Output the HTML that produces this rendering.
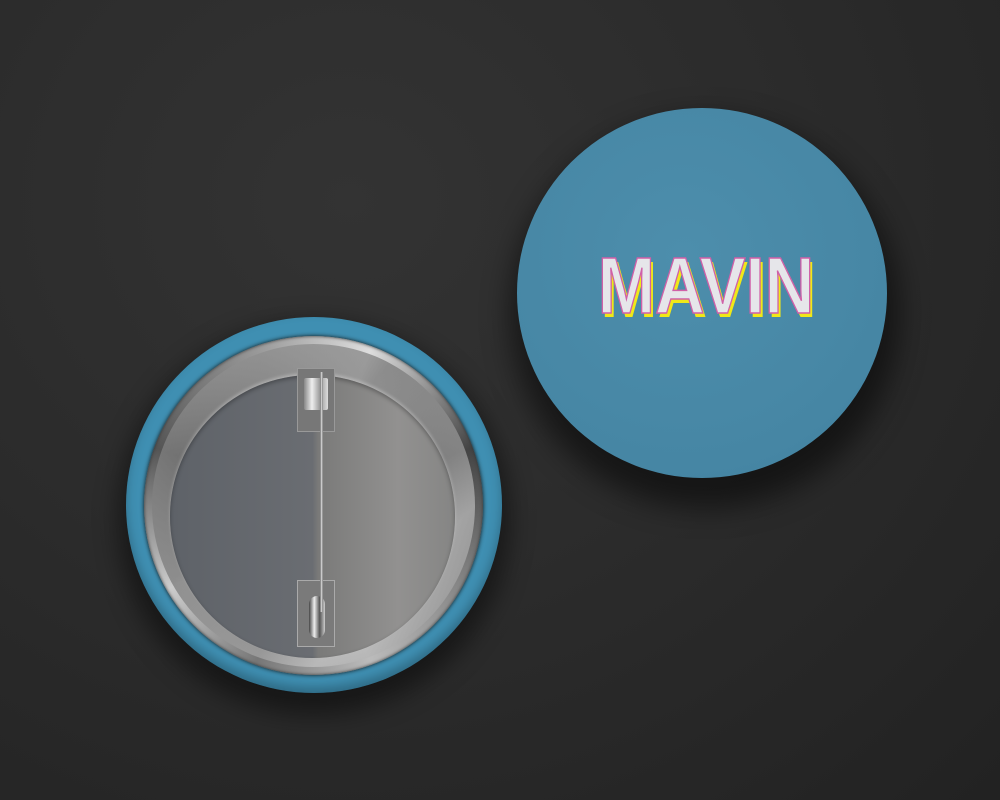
<!DOCTYPE html>
<html><head><style>
html,body{margin:0;padding:0}
body{width:1000px;height:800px;overflow:hidden;position:relative;background:radial-gradient(ellipse at 35% 25%,#333 0%,#2b2b2b 50%,#222 100%);font-family:"Liberation Sans",sans-serif}
.c{position:absolute;border-radius:50%}
</style></head><body>
<div class="c" style="left:118px;top:322px;width:392px;height:392px;background:rgba(0,0,0,.45);filter:blur(12px)"></div>
<div class="c" style="left:126px;top:317px;width:376px;height:376px;background:#3f8fb2;box-shadow:inset 0 -6px 10px rgba(0,0,0,.25)"></div>
<div class="c" style="left:144px;top:336px;width:339px;height:339px;background:conic-gradient(from 200deg,#777,#ccc 40deg,#555 90deg,#999 140deg,#ddd 180deg,#444 230deg,#888 280deg,#bbb 320deg,#777);box-shadow:0 0 4px #111,inset 0 0 3px #333"></div>
<div class="c" style="left:152px;top:344px;width:323px;height:323px;background:linear-gradient(135deg,#aaa,#666 40%,#ccc 75%,#777);opacity:.6"></div>
<div class="c" style="left:170px;top:375px;width:285px;height:283px;background:linear-gradient(90deg,#5e6268 0%,#6a6d72 50%,#7a7a79 52%,#929190 80%,#858584 100%);box-shadow:0 -2px 3px rgba(255,255,255,.3),inset 0 2px 4px rgba(0,0,0,.3)"></div>
<div style="position:absolute;left:297px;top:368px;width:38px;height:64px;border:1px solid #999;background:#777;box-sizing:border-box"></div>
<div style="position:absolute;left:304px;top:378px;width:24px;height:32px;background:linear-gradient(90deg,#888,#eee,#999,#ddd);border-radius:2px"></div>
<div style="position:absolute;left:297px;top:580px;width:38px;height:67px;border:1px solid #aaa;background:#7a7a7a;box-sizing:border-box"></div>
<div style="position:absolute;left:309px;top:596px;width:16px;height:42px;background:linear-gradient(90deg,#444,#eee,#555,#ccc);border-radius:8px"></div>
<div style="position:absolute;left:320px;top:372px;width:3px;height:240px;background:linear-gradient(90deg,#666,#ddd,#777)"></div>
<div class="c" style="left:510px;top:118px;width:390px;height:390px;background:rgba(0,0,0,.5);filter:blur(14px)"></div>
<div class="c" style="left:517px;top:108px;width:370px;height:370px;background:radial-gradient(circle at 45% 40%,#4d8eac,#4686a4 70%,#3f7f9e 100%)"></div>
<div style="position:absolute;left:556px;top:243px;width:300px;text-align:center;font-weight:bold;font-size:80px;line-height:86px;color:#e6e6ea;-webkit-text-stroke:1.5px #d060a8;text-shadow:3px 4px 0 #f0e818;transform:scaleX(0.86);transform-origin:150px 0">MAVIN</div>
</body></html>
